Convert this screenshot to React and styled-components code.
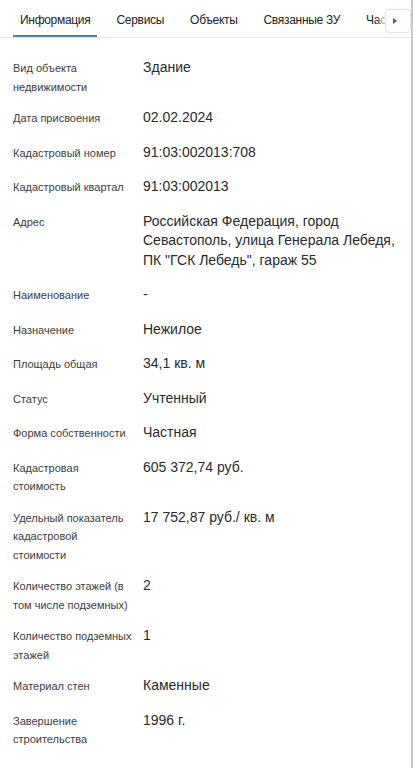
import React from "react";
import styled, { createGlobalStyle } from "styled-components";

const GlobalStyle = createGlobalStyle`
  html, body {
    margin: 0;
    padding: 0;
    background: #ffffff;
  }
  body {
    font-family: "Liberation Sans", Arial, sans-serif;
    -webkit-font-smoothing: antialiased;
  }
`;

const tabs = ["Информация", "Сервисы", "Объекты", "Связанные ЗУ", "Части"];

const rows = [
  { label: "Вид объекта недвижимости", value: "Здание" },
  { label: "Дата присвоения", value: "02.02.2024" },
  { label: "Кадастровый номер", value: "91:03:002013:708" },
  { label: "Кадастровый квартал", value: "91:03:002013" },
  {
    label: "Адрес",
    value:
      'Российская Федерация, город Севастополь, улица Генерала Лебедя, ПК "ГСК Лебедь", гараж 55',
  },
  { label: "Наименование", value: "-" },
  { label: "Назначение", value: "Нежилое" },
  { label: "Площадь общая", value: "34,1 кв. м" },
  { label: "Статус", value: "Учтенный" },
  { label: "Форма собственности", value: "Частная" },
  { label: "Кадастровая стоимость", value: "605 372,74 руб." },
  { label: "Удельный показатель кадастровой стоимости", value: "17 752,87 руб./ кв. м" },
  { label: "Количество этажей (в том числе подземных)", value: "2" },
  { label: "Количество подземных этажей", value: "1" },
  { label: "Материал стен", value: "Каменные" },
  { label: "Завершение строительства", value: "1996 г." },
];

const Page = styled.div`
  width: 413px;
  min-height: 768px;
  box-sizing: border-box;
  border-right: 2px solid #c9c9c9;
  background: #fff;
`;

const TabBar = styled.div`
  position: relative;
  height: 37px;
  border-bottom: 1px solid #e6e8ea;
  overflow: hidden;
`;

const TabList = styled.div`
  display: flex;
  gap: 12px;
  padding-left: 13px;
  height: 100%;
  white-space: nowrap;
`;

const Tab = styled.div`
  display: flex;
  align-items: center;
  padding: 4px 7px 0;
  font-size: 12px;
  letter-spacing: -0.3px;
  color: #222;
  border-bottom: 2px solid ${(p) => (p.$active ? "#4b7fa3" : "transparent")};
  box-sizing: border-box;
  height: 37px;
`;

const ScrollButton = styled.button`
  position: absolute;
  top: 9px;
  right: 0;
  width: 26px;
  height: 24px;
  padding: 0;
  display: flex;
  align-items: center;
  justify-content: center;
  background: #fff;
  border: 1px solid #e3e6e8;
  border-radius: 4px;
  box-shadow: -4px 0 6px rgba(255, 255, 255, 0.9), -1px 0 3px rgba(0, 0, 0, 0.06);
`;

const Arrow = styled.span`
  width: 0;
  height: 0;
  border-top: 3px solid transparent;
  border-bottom: 3px solid transparent;
  border-left: 4px solid #2b6a8d;
  margin-left: -6px;
`;

const List = styled.div`
  display: flex;
  flex-direction: column;
  gap: 13px;
  padding: 21px 13px 20px;
`;

const Row = styled.div`
  display: grid;
  grid-template-columns: 119px 1fr;
  gap: 11px;
  align-items: start;
`;

const Label = styled.div`
  font-size: 11px;
  line-height: 18.5px;
  color: #3d3d3d;
`;

const Value = styled.div`
  font-size: 14px;
  line-height: 19.5px;
  color: #2a2a2a;
  margin-top: -1px;
  padding-bottom: 3px;
`;

export default function App() {
  return (
    <>
      <GlobalStyle />
      <Page>
        <TabBar>
          <TabList>
            {tabs.map((t, i) => (
              <Tab key={t} $active={i === 0}>
                {t}
              </Tab>
            ))}
          </TabList>
          <ScrollButton aria-label="Далее">
            <Arrow />
          </ScrollButton>
        </TabBar>
        <List>
          {rows.map((r) => (
            <Row key={r.label}>
              <Label>{r.label}</Label>
              <Value>{r.value}</Value>
            </Row>
          ))}
        </List>
      </Page>
    </>
  );
}
